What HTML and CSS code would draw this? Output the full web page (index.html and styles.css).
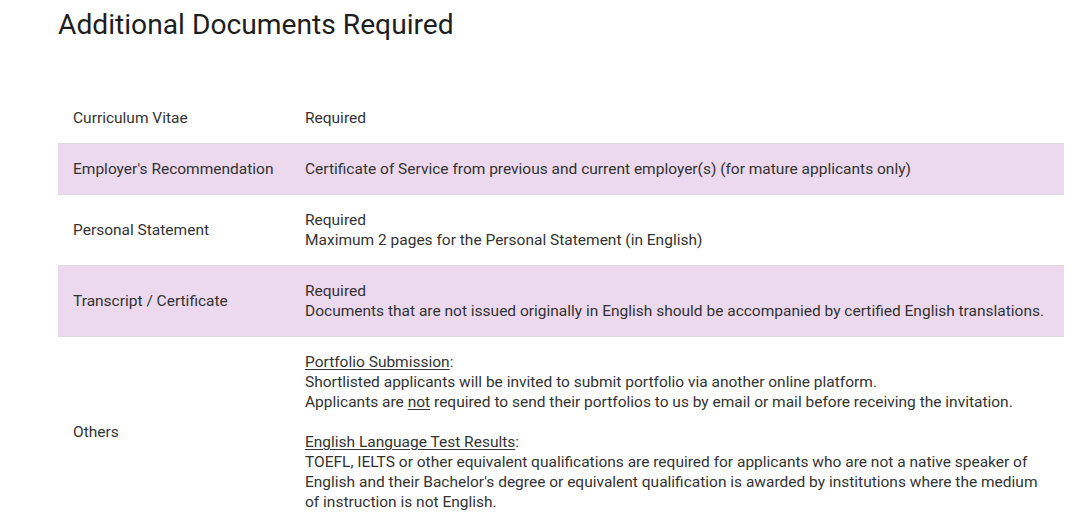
FILE: index.html
```html
<!DOCTYPE html>
<html lang="en">
<head>
<meta charset="utf-8">
<title>Additional Documents Required</title>
<link rel="stylesheet" href="styles.css">
</head>
<body>
<div class="page">
  <h2 class="title">Additional Documents Required</h2>
  <table class="docs">
    <tbody>
      <tr>
        <td class="label">Curriculum Vitae</td>
        <td class="value">Required</td>
      </tr>
      <tr class="alt">
        <td class="label">Employer's Recommendation</td>
        <td class="value">Certificate of Service from previous and current employer(s) (for mature applicants only)</td>
      </tr>
      <tr>
        <td class="label">Personal Statement</td>
        <td class="value">Required<br>Maximum 2 pages for the Personal Statement (in English)</td>
      </tr>
      <tr class="alt">
        <td class="label">Transcript / Certificate</td>
        <td class="value">Required<br>Documents that are not issued originally in English should be accompanied by certified English translations.</td>
      </tr>
      <tr>
        <td class="label">Others</td>
        <td class="value"><u>Portfolio Submission</u>:<br>Shortlisted applicants will be invited to submit portfolio via another online platform.<br>Applicants are <u>not</u> required to send their portfolios to us by email or mail before receiving the invitation.<br><br><u>English Language Test Results</u>:<br>TOEFL, IELTS or other equivalent qualifications are required for applicants who are not a native speaker of English and their Bachelor's degree or equivalent qualification is awarded by institutions where the medium of instruction is not English.</td>
      </tr>
    </tbody>
  </table>
</div>
</body>
</html>
```

FILE: styles.css
```css
html, body {
  margin: 0;
  padding: 0;
  background: #ffffff;
}
body {
  font-family: Roboto, "Liberation Sans", Arial, sans-serif;
  color: #333333;
}
.page {
  padding: 0 16px 0 58px;
}
.title {
  margin: 0;
  padding-top: 6px;
  font-size: 28.2px;
  font-weight: 400;
  line-height: 38px;
  color: #1e1e1e;
}
.docs {
  margin-top: 49px;
  width: 1006px;
  border-collapse: collapse;
  font-size: 15.5px;
  line-height: 20px;
}
.docs tr {
  border-top: 1px solid #dcdcdc;
}
.docs tr:first-child {
  border-top: none;
}
.docs tr.alt {
  background: #ecd9ee;
}
.docs td {
  padding: 15px 15px;
  vertical-align: middle;
}
.docs td.label {
  width: 202px;
}
.docs td.value {
  padding-right: 15px;
}
.docs u {
  text-underline-offset: 2px;
}
```
